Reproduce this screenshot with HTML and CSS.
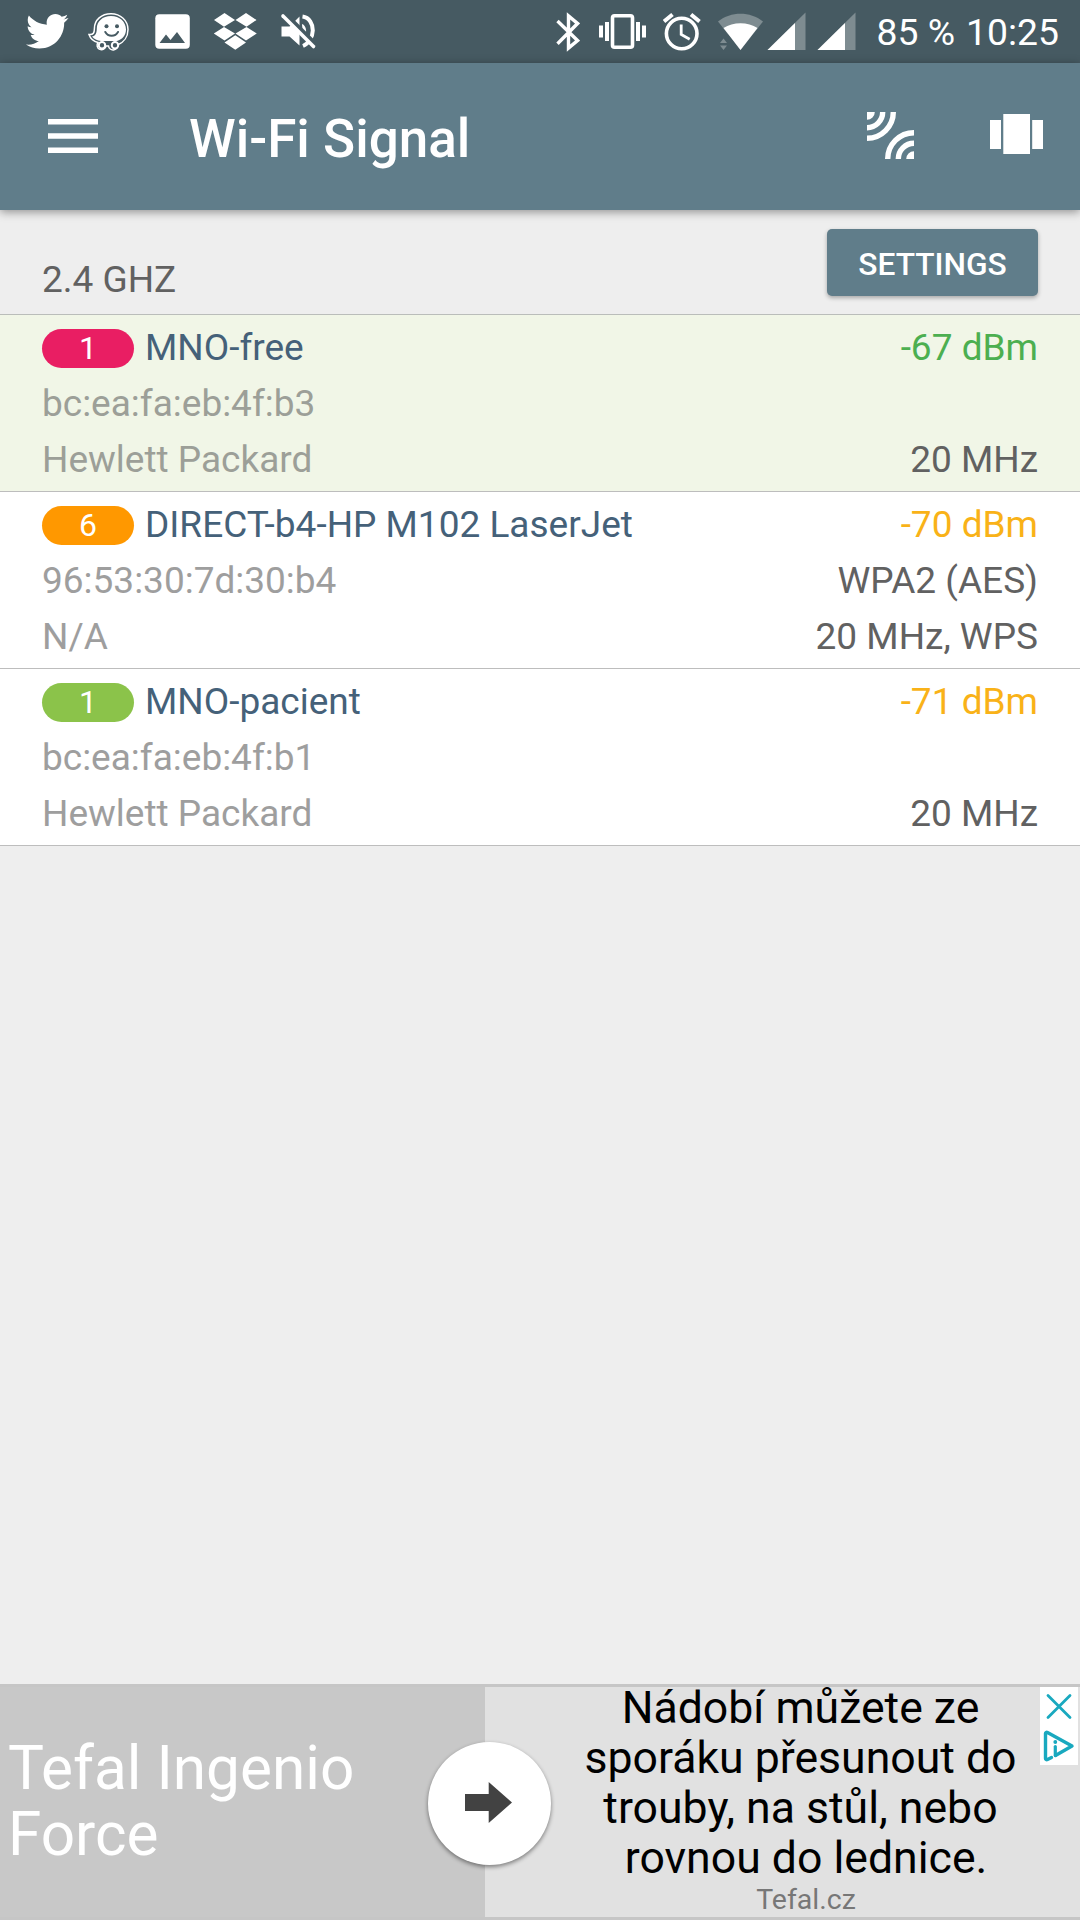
FILE: index.html
```
<!DOCTYPE html>
<html lang="en">
<head>
    <meta charset="UTF-8">
    <meta name="viewport" content="width=device-width, initial-scale=1.0">
    <title>Wi-Fi Signal</title>
    <link rel="stylesheet" href="styles.css">
</head>
<body>
    <div class="screen">
        <div class="status-bar">
            <div class="notifications">
                <!-- twitter -->
                <svg width="45" height="40" viewBox="0 0 45 40" fill="#fff">
                    <path transform="translate(2 -2) scale(1.77)" d="M23.954 4.569c-.885.389-1.83.654-2.825.775 1.014-.611 1.794-1.574 2.163-2.723-.951.555-2.005.959-3.127 1.184-.896-.959-2.173-1.559-3.591-1.559-2.717 0-4.92 2.203-4.92 4.917 0 .39.045.765.127 1.124C7.691 8.094 4.066 6.13 1.64 3.161c-.427.722-.666 1.561-.666 2.475 0 1.71.87 3.213 2.188 4.096-.807-.026-1.566-.248-2.228-.616v.061c0 2.385 1.693 4.374 3.946 4.827-.413.111-.849.171-1.296.171-.314 0-.615-.03-.916-.086.631 1.953 2.445 3.377 4.604 3.417-1.68 1.319-3.809 2.105-6.102 2.105-.39 0-.779-.023-1.17-.067 2.189 1.394 4.768 2.209 7.557 2.209 9.054 0 13.999-7.496 13.999-13.986 0-.209 0-.42-.015-.63.961-.689 1.8-1.56 2.46-2.548z"/>
                </svg>
                <!-- waze -->
                <svg width="45" height="40" viewBox="0 0 45 40">
                    <path d="M24 1.7C14.500 1.700 7.400 8 7.400 16.500C7.400 20.500 6.500 23 2 22.500C3.500 27 7 29.500 11 30.500A4.500 4.500 0 1 0 19 34H21.500A4.500 4.500 0 1 0 30.500 33C37 30.500 41 24.500 41 17.500C41 8.500 33.500 1.700 24 1.700Z" fill="none" stroke="#fff" stroke-width="1.500"/>
                    <path d="M24 4C15.500 4 9.800 9.500 9.800 16.500C9.800 21 8.500 24.300 5 24.500C7 27.300 10 28.500 14 29H30C35.500 27.500 39 23 39 17.500C39 9.800 32.500 4 24 4Z" fill="#fff"/>
                    <circle cx="15" cy="33.200" r="3.200" fill="#465a62" stroke="#fff" stroke-width="2"/>
                    <circle cx="28" cy="33.200" r="3.200" fill="#465a62" stroke="#fff" stroke-width="2"/>
                    <circle cx="19.500" cy="14.200" r="2" fill="#465a62"/>
                    <circle cx="30" cy="14.200" r="2" fill="#465a62"/>
                    <path d="M18.300 20c2.700 5 10 5 12.700 0" fill="none" stroke="#465a62" stroke-width="2" stroke-linecap="round"/>
                </svg>
                <!-- picture -->
                <svg width="45" height="40" viewBox="0 0 45 40">
                    <rect x="5.300" y="2.300" width="34.500" height="34.500" rx="4" fill="#fff"/>
                    <path d="M9.500 31h25.500l-8-11-6.500 8-4.500-5.500z" fill="#465a62"/>
                </svg>
                <!-- dropbox -->
                <svg width="45" height="40" viewBox="0 0 45 40" fill="#fff">
                    <path d="M11.500 1L22 8 11 14.800 1 8zM33 1L43.500 8 33.500 14.800 22.500 8zM11 15L22 21.500 11.500 28.500.8 21.500zM33.500 15L43.800 21.500 33 28.500 22.500 21.500zM22.300 23.200L33 30.500 22.300 37.800 11.500 30.500z"/>
                </svg>
                <!-- muted -->
                <svg width="45" height="40" viewBox="0 0 45 40">
                    <path d="M5.500 14.500h8l10-10v29l-10-9h-8z" fill="#fff"/>
                    <path d="M26.500 4.600C33.500 5.500 37 12.500 36.800 18.500S33 31.500 27 34" fill="none" stroke="#fff" stroke-width="4"/>
                    <path d="M26 12c4.500 1.500 6 10 1 13.500z" fill="#fff"/>
                    <path d="M9 1.500L41 33.500" stroke="#465a62" stroke-width="4"/>
                    <path d="M7 4L37.500 34.500" stroke="#fff" stroke-width="3.600" stroke-linecap="round"/>
                </svg>
            </div>
            <div class="system">
                <!-- bluetooth -->
                <svg class="bluetooth" width="24" height="40" viewBox="0 0 24 40" fill="none" stroke="#fff" stroke-width="3.400">
                    <path d="M1.500 9L21.500 28.500 12.500 36V4l9 7.500L1.500 31.700"/>
                </svg>
                <!-- vibrate -->
                <svg class="vibrate" width="48" height="40" viewBox="0 0 48 40">
                    <rect x="13.500" y="3.800" width="20" height="31.500" rx="2" fill="none" stroke="#fff" stroke-width="3.600"/>
                    <path d="M0 13.500h4v12H0zM6 10h4v19H6zM37 10h4v19h-4zM43 13.500h4v12h-4z" fill="#fff"/>
                </svg>
                <!-- alarm -->
                <svg class="alarm" width="38" height="40" viewBox="0 0 38 40" fill="none" stroke="#fff" stroke-width="3.600">
                    <circle cx="18.700" cy="21.500" r="15.300"/>
                    <path d="M1 9.500L9.500 2.500M28 2.500L36.500 9.500" stroke-width="4"/>
                    <path d="M18.200 12.500v10l8.500 4.800" stroke-width="2.800"/>
                </svg>
                <!-- wifi -->
                <svg class="wifi" width="46" height="40" viewBox="0 0 46 40">
                    <path d="M0 9.500C13-.800 32-.800 45 9.500L22.500 38z" fill="#7e8c91"/>
                    <path d="M0 22.500h10.500L18 33v5H0z" fill="#465a62"/>
                    <path d="M5.500 16C15 9.500 30 9.500 39.500 16L22.500 38z" fill="#fff"/>
                    <path d="M2 31l3.500-4.500L9 31zM2 33.500h7L5.500 38z" fill="#7e8c91"/>
                </svg>
                <svg class="signal" width="39" height="40" viewBox="0 0 39 40">
                    <path d="M38.500.500V38H.500z" fill="#7e8c91"/>
                    <path d="M28 11v27H.500z" fill="#fff"/>
                </svg>
                <svg class="signal second" width="39" height="40" viewBox="0 0 39 40">
                    <path d="M38.500.500V38H.500z" fill="#7e8c91"/>
                    <path d="M28 11v27H.500z" fill="#fff"/>
                </svg>
                <span class="battery">85 %</span>
                <span class="clock">10:25</span>
            </div>
        </div>

        <div class="app-bar">
            <svg class="menu" width="50" height="34" viewBox="0 0 50 34" fill="#fff">
                <path d="M0 0h50v5.500H0zM0 14.200h50v5.500H0zM0 28.400h50v5.500H0z"/>
            </svg>
            <h1>Wi-Fi Signal</h1>
            <svg class="leak" width="47" height="47" viewBox="0 0 47 47">
                <path d="M0 0h7.800A7.800 7.800 0 0 1 0 7.800zM47 47h-7.800a7.800 7.800 0 0 1 7.800-7.800z" fill="#fff"/>
                <path d="M15.700 0A15.700 15.700 0 0 1 0 15.700M26.300 0A26.300 26.300 0 0 1 0 26.300M31.300 47A15.700 15.700 0 0 1 47 31.300M20.700 47A26.300 26.300 0 0 1 47 20.700" fill="none" stroke="#fff" stroke-width="5.400"/>
            </svg>
            <svg class="carousel" width="53" height="40" viewBox="0 0 53 40" fill="#fff">
                <path d="M0 6h11v29H0zM13.300 0h26.700v40H13.300zM42.200 6H53v29H42.200z"/>
            </svg>
        </div>

        <div class="band-header">
            <span>2.4 GHZ</span>
            <button class="settings">SETTINGS</button>
        </div>

        <div class="network connected">
            <div class="line">
                <span class="channel pink">1</span>
                <span class="name">MNO-free</span>
                <span class="level good">-67 dBm</span>
            </div>
            <div class="line">
                <span class="detail">bc:ea:fa:eb:4f:b3</span>
            </div>
            <div class="line">
                <span class="detail">Hewlett Packard</span>
                <span class="info">20 MHz</span>
            </div>
        </div>

        <div class="network">
            <div class="line">
                <span class="channel orange">6</span>
                <span class="name">DIRECT-b4-HP M102 LaserJet</span>
                <span class="level fair">-70 dBm</span>
            </div>
            <div class="line">
                <span class="detail">96:53:30:7d:30:b4</span>
                <span class="info">WPA2 (AES)</span>
            </div>
            <div class="line">
                <span class="detail">N/A</span>
                <span class="info">20 MHz, WPS</span>
            </div>
        </div>

        <div class="network">
            <div class="line">
                <span class="channel green">1</span>
                <span class="name">MNO-pacient</span>
                <span class="level fair">-71 dBm</span>
            </div>
            <div class="line">
                <span class="detail">bc:ea:fa:eb:4f:b1</span>
            </div>
            <div class="line">
                <span class="detail">Hewlett Packard</span>
                <span class="info">20 MHz</span>
            </div>
        </div>

        <div class="ad">
            <div class="ad-title">Tefal Ingenio<br>Force</div>
            <div class="ad-body">
                <div class="ad-text">Nádobí můžete ze&nbsp;<br>sporáku přesunout do&nbsp;<br>trouby, na stůl, nebo&nbsp;<br>rovnou do lednice.</div>
                <div class="ad-site">Tefal.cz</div>
            </div>
            <div class="ad-arrow">
                <svg width="47" height="41" viewBox="0 0 47 41" fill="#424242">
                    <path d="M0 12h23.700V0L47 20.500 23.700 41V29H0z"/>
                </svg>
            </div>
            <div class="ad-choices">
                <svg width="38" height="78" viewBox="0 0 38 78" fill="none" stroke="#19a9bf" stroke-width="2.800" stroke-linecap="round" stroke-linejoin="round">
                    <path d="M8 8.500L30 30.500M30 8.500L8 30.500"/>
                    <path d="M15.500 68.500L32 59 7.500 45.500c-1-.500-2 0-2 1V71.500c0 1 1 1.500 2 1L11.500 70.500" stroke-width="3.400"/>
                    <path d="M15.300 59.500v9" stroke-width="3.200"/>
                    <circle cx="15.300" cy="55" r="1.900" fill="#19a9bf" stroke="none"/>
                </svg>
            </div>
        </div>
    </div>
</body>
</html>
```
FILE: styles.css
```
body {
    margin: 0;
    font-family: Roboto, "Liberation Sans", sans-serif;
    background-color: #eeeeee;
}
.screen {
    display: flex;
    flex-direction: column;
    width: 1080px;
    height: 1920px;
    overflow: hidden;
}
svg {
    display: block;
    flex: none;
}

/* status bar */
.status-bar {
    display: flex;
    justify-content: space-between;
    height: 51px;
    padding: 12px 21px 0 24px;
    background-color: #465a62;
    color: white;
}
.notifications {
    display: flex;
    gap: 18px;
}
.system {
    display: flex;
    font-size: 37.3px;
    line-height: 41px;
}
.vibrate {
    margin-left: 19px;
}
.alarm {
    margin-left: 16px;
}
.wifi {
    margin-left: 17px;
}
.signal {
    margin-left: 3px;
}
.signal.second {
    margin-left: 11px;
}
.battery {
    margin-left: 21px;
}
.clock {
    margin-left: 11px;
}

/* app bar */
.app-bar {
    display: flex;
    align-items: center;
    position: relative;
    height: 147px;
    padding: 0 37px 0 48px;
    background-color: #607d8a;
    box-shadow: 0 2px 9px rgba(0, 0, 0, 0.4);
    color: white;
}
.menu {
    margin-bottom: 1px;
}
h1 {
    flex: 1;
    margin: 4px 0 0 91px;
    font-size: 53px;
    font-weight: 500;
    line-height: 60px;
}
.leak {
    margin-right: 76px;
    margin-bottom: 3px;
}
.carousel {
    margin-bottom: 5px;
}

/* network list */
.band-header {
    display: flex;
    justify-content: space-between;
    height: 104px;
    padding: 0 42px;
    border-bottom: 1px solid #babdba;
    color: #616161;
    font-size: 37px;
}
.band-header span {
    margin-top: 48px;
    line-height: 44px;
}
.settings {
    width: 211px;
    height: 67px;
    margin-top: 19px;
    padding: 3px 0 0;
    border: none;
    border-radius: 5px;
    background-color: #607d8a;
    box-shadow: 0 2px 4px rgba(0, 0, 0, 0.3);
    color: white;
    font-family: inherit;
    font-size: 31.7px;
    font-weight: 500;
}
.network {
    padding: 5px 42px 3px;
    border-bottom: 1px solid #bdbdbd;
    background-color: white;
    font-size: 37px;
}
.network.connected {
    background-color: #f1f6e7;
}
.line {
    display: flex;
    height: 56px;
    line-height: 56px;
}
.channel {
    width: 92px;
    height: 39px;
    margin: 9px 11px 0 0;
    border-radius: 20px;
    color: white;
    font-size: 32px;
    line-height: 39px;
    text-align: center;
}
.pink {
    background-color: #e91e63;
}
.orange {
    background-color: #ff9800;
}
.green {
    background-color: #8bc34a;
}
.name {
    color: #456179;
}
.detail {
    color: #9e9e9e;
}
.connected .detail {
    color: #9c9f98;
}
.level, .info {
    margin-left: auto;
}
.info {
    color: #616161;
}
.good {
    color: #4caf50;
}
.fair {
    color: #f9b218;
}

/* ad banner */
.ad {
    display: flex;
    position: relative;
    height: 230px;
    margin-top: auto;
    border-top: 3px solid #c6c6c6;
    border-bottom: 3px solid #c6c6c6;
    background-color: #e1e1e1;
}
.ad-title {
    box-sizing: border-box;
    width: 485px;
    padding: 49px 0 0 8px;
    background-color: #c8c8c8;
    color: white;
    font-size: 60.3px;
    line-height: 66px;
}
.ad-body {
    flex: 1;
    padding-left: 47px;
    text-align: center;
}
.ad-text {
    margin-top: -4px;
    color: black;
    font-size: 44.6px;
    line-height: 50px;
}
.ad-site {
    color: #777777;
    font-size: 28.5px;
    line-height: 34px;
}
.ad-arrow {
    display: flex;
    align-items: center;
    justify-content: center;
    position: absolute;
    left: 428px;
    top: 55px;
    box-sizing: border-box;
    width: 123px;
    height: 123px;
    padding: 0 3px 2px 0;
    border-radius: 50%;
    background-color: white;
    box-shadow: 0 2px 4px rgba(0, 0, 0, 0.45);
}
.ad-choices {
    position: absolute;
    top: 0;
    right: 2px;
    background-color: white;
}
```
